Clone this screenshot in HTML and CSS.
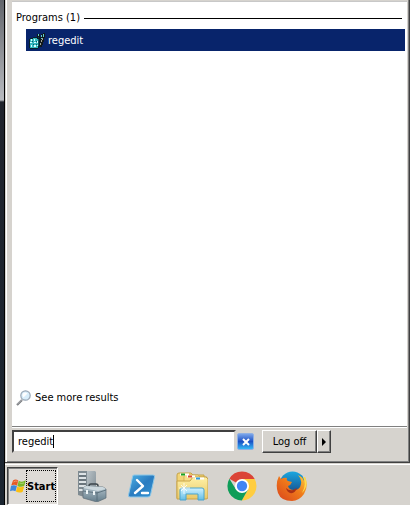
FILE: index.html
```html
<!DOCTYPE html>
<html lang="en">
<head>
    <meta charset="UTF-8">
    <meta name="viewport" content="width=device-width, initial-scale=1.0">
    <title>Start Menu</title>
    <link rel="stylesheet" href="styles.css">
</head>
<body>
    <div class="desktop-edge"></div>
    <div class="screen">
        <main class="start-menu">
            <section class="results">
                <h1 class="group-title">Programs (1)</h1>
                <a class="result" href="#">
                    <svg class="icon-small" viewBox="0 0 16 16" shape-rendering="crispEdges">
                        <path d="M0 6h1V5h3V4h5v1h2v9h-1v1H9v1H1v-1H0z" fill="#06222a"/>
                        <path d="M1 6h3V5h4v1h2v7H9v2H1z" fill="#35b9c0"/>
                        <path d="M2 6h1v2H2zM5 6h1v2H5zM1 9h2v1H1zM5 9h2v1H5zM2 12h1v2H2zM5 12h2v2H5zM8 8h1v2H8zM8 12h1v1H8z" fill="#d9ffff"/>
                        <path d="M3 8h1v1H3zM7 8h1v1H7zM4 11h1v1H4zM7 11h1v1H7zM9 6h1v7H9z" fill="#0b5963"/>
                        <path d="M8 1h3v3h1V1h2V0h2v5h-1v4h-1v3h-1v2h-2V6h-1V4H8z" fill="#10191c"/>
                        <path d="M9 1h1v2H9zM12 2h1v2h-1zM14 1h1v3h-1zM12 5h1v1h-1z" fill="#63cbd0"/>
                        <path d="M12 7h1v2h-1zM11 10h1v2h-1zM13 5h1v2h-1z" fill="#a3a294"/>
                    </svg>
                    <span>regedit</span>
                </a>
                <a class="more" href="#">
                    <svg class="icon-small" viewBox="0 0 16 16">
                        <path d="M1 15l5-5" stroke="#77797d" stroke-width="2.2"/>
                        <path d="M1 14.500l4.500-4.500" stroke="#c5c7ca" stroke-width=".8"/>
                        <circle cx="9.500" cy="5.500" r="4.700" fill="#d9eefb" stroke="#9aa7b5" stroke-width="1.200"/>
                        <path d="M6.500 5.500a3 3 0 0 1 3-3l2 1-4 4z" fill="#fff"/>
                    </svg>
                    <span>See more results</span>
                </a>
            </section>
            <form class="search">
                <div class="search-field">
                    <input class="search-box" type="text" value="regedit" aria-label="Search programs and files">
                    <span class="caret"></span>
                </div>
                <button class="clear" type="reset" aria-label="Clear">
                    <svg viewBox="0 0 10 10"><path d="M2 2l6 6M8 2l-6 6" stroke="#fff" stroke-width="2"/></svg>
                </button>
                <button class="logoff" type="button">Log off</button>
                <button class="logoff-more" type="button" aria-label="Shut down options">
                    <svg viewBox="0 0 4 8"><path d="M0 0l4 4-4 4z"/></svg>
                </button>
            </form>
        </main>
        <nav class="taskbar">
            <button class="start" type="button">
                <svg class="icon-small" viewBox="0 1 16 14">
                    <path d="M3 2.500C5 1 6.800 1.500 8.300 2.500L7 7.700C5.200 6.500 3.400 6.500 1.200 7.500z" fill="#e65a24"/>
                    <path d="M8.800 2.700C11 4 13 4 15.800 2.300L14.300 7.800C12 9 9.800 9.100 7.400 7.900z" fill="#7ab829"/>
                    <path d="M1 8C3.200 7 5.200 7.200 6.900 8.200L5.500 13.300C3.700 12.200 2 12.200 0 13.200z" fill="#3f86d9"/>
                    <path d="M7.300 8.500C9.500 9.700 11.700 9.600 14.200 8.300L12.700 13.700C10.500 15 8 14.800 5.900 13.600z" fill="#fbc013"/>
                    <path d="M3.500 4q2-1.500 4-.7M9.500 5q2 1 4.500 0" stroke="#fff" stroke-opacity=".35" fill="none"/>
                </svg>
                <span class="start-label">Start</span>
            </button>
            <a class="task" href="#" aria-label="Server Manager">
                <svg viewBox="0 0 32 32">
                    <defs>
                        <linearGradient id="tower" x2="1" y2="1"><stop stop-color="#b9c2c7"/><stop offset="1" stop-color="#7e8b93"/></linearGradient>
                        <linearGradient id="box" x2="0" y2="1"><stop stop-color="#b3c3cc"/><stop offset="1" stop-color="#647d8b"/></linearGradient>
                    </defs>
                    <path d="M2 1h9v27l-9-3z" fill="#7f8b92"/>
                    <path d="M11 1h8l1 1v26h-9z" fill="url(#tower)"/>
                    <path d="M3 4h7M3 8h7M3 12h7M3 16h7M3 20h5" stroke="#dde3e6" stroke-width="2"/>
                    <path d="M3 6h7M3 10h7M3 14h7" stroke="#566168"/>
                    <path d="M13 18v-2q0-2 2-2h5q2 0 2 2v2" fill="none" stroke="#3c464c" stroke-width="1.500"/>
                    <path d="M7 18l3-2 17 1 3 2v9l-9 4-14-4z" fill="url(#box)" stroke="#5b6b75" stroke-width=".7"/>
                    <path d="M7 18l3-2 17 1 3 2-8 2z" fill="#ccd8de"/>
                    <path d="M7 21l14 2 9-3M21 22v9" stroke="#526773" stroke-width=".8" fill="none"/>
                    <path d="M11 20v4M18 21v4" stroke="#edf4f6" stroke-width="2"/>
                </svg>
            </a>
            <a class="task" href="#" aria-label="Windows PowerShell">
                <svg viewBox="0 0 32 32">
                    <defs><linearGradient id="shell" x2="1" y2="1"><stop stop-color="#4eb3e6"/><stop offset=".5" stop-color="#2b7cc0"/><stop offset="1" stop-color="#3294d4"/></linearGradient></defs>
                    <path d="M8 5h19q2 0 1.500 2l-4 18q-.5 2-2.500 2H4q-2 0-1.500-2l4-18Q6.500 5 8 5z" fill="url(#shell)" stroke="#8fc8e8"/>
                    <path d="M11 10l6 6-8 7M16 23h6" fill="none" stroke="#fff" stroke-width="2.400" stroke-linecap="round" stroke-linejoin="round"/>
                </svg>
            </a>
            <a class="task" href="#" aria-label="Windows Explorer">
                <svg viewBox="0 0 32 32">
                    <defs>
                        <linearGradient id="folder" x2="0" y2="1"><stop stop-color="#fff1a6"/><stop offset="1" stop-color="#e9c868"/></linearGradient>
                        <linearGradient id="stand" x2="0" y2="1"><stop stop-color="#d1f2ff"/><stop offset="1" stop-color="#62bde5"/></linearGradient>
                    </defs>
                    <path d="M1 28V5q0-2 2-2h12l2 2h11v23z" fill="#f2d477" stroke="#c5a348"/>
                    <path d="M8 7q0-2 2-2h12l2 2h7v20H8z" fill="#f8df8a" stroke="#c5a348" stroke-width=".7"/>
                    <path d="M1 11h13l3-4h13l2 2v18q0 2-2 2H1z" fill="url(#folder)" stroke="#c9a44b"/>
                    <path d="M4 4.500h9M11 6.500h8M19 8.500h9" stroke="#fff" stroke-width="2"/>
                    <path d="M5 4.500h4" stroke="#17a327" stroke-width="2"/>
                    <path d="M12 6.500h4" stroke="#d94934" stroke-width="2"/>
                    <path d="M20 8.500h4" stroke="#2e9ce0" stroke-width="2"/>
                    <path d="M4 30V20q0-2 2-2h20q2 0 2 2v10h-6v-6H10v6z" fill="url(#stand)" stroke="#4aa4cc"/>
                    <path d="M8 13v11M3 18h11M5 15l6 6M11 15l-6 6" stroke="#fff" stroke-width=".8"/>
                </svg>
            </a>
            <a class="task" href="#" aria-label="Google Chrome">
                <svg viewBox="0 0 32 32">
                    <path d="M16 16L3.400 8.700A14.500 14.500 0 0 1 28.700 9H16z" fill="#db4437"/>
                    <path d="M16 9h12.700A14.500 14.500 0 0 1 15.800 30.500L22 19.500z" fill="#ffcd40"/>
                    <path d="M3.400 8.700A14.500 14.500 0 0 0 15.800 30.500L22 19.500H10z" fill="#0f9d58"/>
                    <circle cx="16" cy="16" r="7" fill="#fff"/>
                    <circle cx="16" cy="16" r="5.200" fill="#4285f4"/>
                </svg>
            </a>
            <a class="task" href="#" aria-label="Mozilla Firefox">
                <svg viewBox="0 0 32 32">
                    <defs>
                        <linearGradient id="globe" x2="0" y2="1"><stop stop-color="#1aa7e0"/><stop offset="1" stop-color="#173c7c"/></linearGradient>
                        <linearGradient id="fox" x1="1" x2="0" y2="1"><stop stop-color="#ffd13f"/><stop offset=".45" stop-color="#ef7b1a"/><stop offset="1" stop-color="#d9421c"/></linearGradient>
                    </defs>
                    <circle cx="16.500" cy="14.500" r="13" fill="url(#globe)"/>
                    <path d="M3 6l2 3q3-2 6-1-1 2 1 3l4 1q-1 3-4 4 1 4 6 4 6 0 7-6 1-5-3-9 5 2 6 6l1-4q4 9-1 17-5 7-12 7Q5 31 2 23-1 14 3 6z" fill="url(#fox)"/>
                    <path d="M10 18q3 3 7 2l4-2q-2 6-7 5-3-1-4-5z" fill="#a93016"/>
                    <path d="M27 7q4 8-1 16 7-7 3-16z" fill="#ffdb4d"/>
                </svg>
            </a>
        </nav>
    </div>
</body>
</html>
```

FILE: styles.css
```css
* {
    box-sizing: border-box;
}

body {
    margin: 0;
    display: flex;
    height: 100vh;
    background-color: #d6d3ce;
    font-family: "DejaVu Sans Condensed", Tahoma, sans-serif;
    font-size: 11px;
    line-height: 14px;
    color: #000;
}

button, input {
    font: inherit;
    color: inherit;
    padding: 0;
    margin: 0;
}

a {
    color: inherit;
    text-decoration: none;
}

svg {
    display: block;
}

.desktop-edge {
    flex: none;
    width: 5px;
    border-right: 1px solid #000;
    background: linear-gradient(#62656b, #b8babf 100px, #20242d 102px, #1b2531);
}

.screen {
    flex: 1;
    min-width: 0;
    display: flex;
    flex-direction: column;
}

/* Raised panel */
.start-menu {
    flex: 1;
    min-height: 0;
    display: flex;
    flex-direction: column;
    padding: 1px 1px 0 5px;
    border-right: 1px solid #404040;
    border-bottom: 1px solid #404040;
    box-shadow: inset 1px 0 #d6d3ce, inset 2px 0 #fff, inset -1px -1px #808080;
}

.results {
    flex: 1;
    display: flex;
    flex-direction: column;
    margin-left: 2px;
    margin-right: 1px;
    padding: 9px 2px 20px 4px;
    border-top: 1px solid #c8c8c8;
    background-color: #fff;
}

.group-title {
    display: flex;
    align-items: center;
    gap: 4px;
    margin: 0 3px 4px 0;
    font-size: 11px;
    font-weight: normal;
}

.group-title::after {
    content: "";
    flex: 1;
    height: 1px;
    background-color: #000;
}

.result, .more {
    display: flex;
    align-items: center;
    gap: 3px;
}

.result {
    height: 22px;
    margin-left: 10px;
    padding: 2px 0 0 3px;
    background-color: #08246b;
    color: #fff;
}

.more {
    margin-top: auto;
}

.icon-small {
    flex: none;
    width: 16px;
    height: 16px;
}

.search {
    display: flex;
    align-items: flex-start;
    height: 36px;
    margin-right: 1px;
    margin-left: 2px;
    padding-top: 3px;
    border-top: 1px solid #808080;
    box-shadow: inset 0 1px #fff;
}

.search-field {
    position: relative;
    flex: 0 1 224px;
    min-width: 0;
}

.search-box {
    display: block;
    width: 100%;
    height: 23px;
    padding: 0 4px;
    border: 2px solid;
    border-color: #404040 #d6d3ce #d6d3ce #404040;
    outline: none;
    background-color: #fff;
}

/* Text cursor after the typed word */
.caret {
    position: absolute;
    top: 5px;
    left: 41px;
    width: 1px;
    height: 13px;
    background-color: #000;
}

.clear {
    display: flex;
    align-items: center;
    justify-content: center;
    width: 17px;
    height: 17px;
    margin: 3px 8px 0 1px;
    border: 1px solid #8fb0e4;
    border-radius: 2px;
    background: linear-gradient(#7ba5ea, #1a4fc4 50%, #35b8f5);
}

.clear svg {
    width: 10px;
    height: 10px;
}

.logoff, .logoff-more {
    height: 23px;
    border: 1px solid;
    border-color: #fff #404040 #404040 #fff;
    background-color: #d6d3ce;
    box-shadow: inset -1px -1px #808080;
}

.logoff {
    width: 55px;
}

.logoff-more {
    display: flex;
    align-items: center;
    justify-content: center;
    width: 14px;
}

.logoff-more svg {
    width: 4px;
    height: 8px;
}

.taskbar {
    display: flex;
    height: 42px;
    padding: 3px 2px 0;
    border-top: 1px solid #d6d3ce;
    box-shadow: inset 0 1px #fff;
}

.start {
    display: flex;
    align-items: center;
    width: 51px;
    height: 38px;
    margin-right: 9px;
    padding-left: 2px;
    border: 1px solid;
    border-color: #404040 #fff #fff #404040;
    background-color: #dedbd7;
    box-shadow: inset 1px 1px #808080;
    font-weight: bold;
}

.start-label {
    height: 32px;
    border: 1px dotted #000;
    line-height: 32px;
}

.task {
    display: flex;
    justify-content: center;
    align-items: center;
    width: 50px;
}

.task svg {
    width: 32px;
    height: 32px;
}
```
